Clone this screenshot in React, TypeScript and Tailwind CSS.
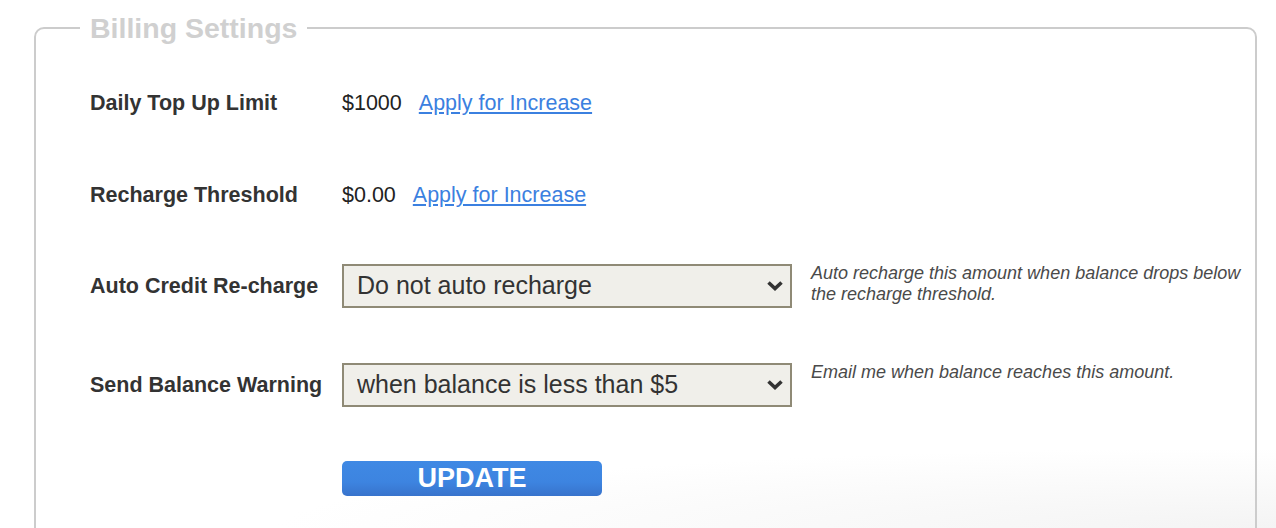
import React from "react";

const font = { fontFamily: '"Liberation Sans", Arial, Helvetica, sans-serif' };

function Chevron() {
  return (
    <svg
      className="pointer-events-none absolute right-[8px] top-1/2 -translate-y-1/2"
      width="18"
      height="12"
      viewBox="0 0 18 12"
      fill="none"
    >
      <path d="M2.5 2.5 L9 8.5 L15.5 2.5" stroke="#333" strokeWidth="3.6" strokeLinecap="butt" />
    </svg>
  );
}

function FakeSelect({ options }: { options: string[] }) {
  return (
    <div className="relative w-[450px] h-[44px] shrink-0">
      <select
        defaultValue={options[0]}
        className="appearance-none w-full h-full border-2 border-[#8f8a76] bg-[#f0efea] pl-[13px] pr-10 text-[25px] text-[#333] outline-none rounded-none"
        style={font}
      >
        {options.map((o) => (
          <option key={o}>{o}</option>
        ))}
      </select>
      <Chevron />
    </div>
  );
}

export default function App() {
  return (
    <div
      className="h-[528px] w-full overflow-hidden bg-[radial-gradient(1000px_80px_at_100%_100%,#f4f4f4,#ffffff)] pt-[12px] pl-[34px] pr-[19px]"
      style={font}
    >
      <fieldset className="border-2 border-[#cccccc] rounded-[10px] pl-[54px] pr-0 pt-[36px] h-[640px] min-w-0">
        <legend className="-ml-[10px] px-[10px] text-[28.5px] leading-[32px] font-bold text-[#d0d0d0]">
          Billing Settings
        </legend>

        {/* Daily Top Up Limit */}
        <div className="flex items-center h-[46px]">
          <div className="w-[252px] shrink-0 text-[21.5px] font-bold text-[#333]">Daily Top Up Limit</div>
          <div className="text-[21.5px] text-[#222]">$1000</div>
          <a href="#" className="ml-[17px] text-[21.5px] text-[#3b80e0] underline">
            Apply for Increase
          </a>
        </div>

        {/* Recharge Threshold */}
        <div className="flex items-center h-[46px] mt-[46px]">
          <div className="w-[252px] shrink-0 text-[21.5px] font-bold text-[#333]">Recharge Threshold</div>
          <div className="text-[21.5px] text-[#222]">$0.00</div>
          <a href="#" className="ml-[17px] text-[21.5px] text-[#3b80e0] underline">
            Apply for Increase
          </a>
        </div>

        {/* Auto Credit Re-charge */}
        <div className="flex items-start mt-[46px]">
          <div className="w-[252px] shrink-0 h-[44px] flex items-center text-[21.5px] font-bold text-[#333]">
            Auto Credit Re-charge
          </div>
          <FakeSelect options={["Do not auto recharge", "$10", "$25", "$50", "$100"]} />
          <p className="ml-[19px] -mt-[1px] w-[440px] shrink-0 text-[18px] leading-[21px] italic text-[#4a4a4a]">
            Auto recharge this amount when balance drops below the recharge threshold.
          </p>
        </div>

        {/* Send Balance Warning */}
        <div className="flex items-start mt-[55px]">
          <div className="w-[252px] shrink-0 h-[44px] flex items-center text-[21.5px] font-bold text-[#333]">
            Send Balance Warning
          </div>
          <FakeSelect options={["when balance is less than $5", "when balance is less than $10", "Never"]} />
          <p className="ml-[19px] -mt-[1px] w-[440px] shrink-0 text-[18px] leading-[21px] italic text-[#4a4a4a]">
            Email me when balance reaches this amount.
          </p>
        </div>

        <div className="flex mt-[54px]">
          <div className="w-[252px] shrink-0" />
          <button
            type="button"
            className="w-[260px] h-[35px] rounded-[5px] bg-[linear-gradient(to_bottom,#3f89e4_0%,#3d84e0_60%,#3873cc_100%)] text-white text-[27px] font-bold leading-none"
          >
            UPDATE
          </button>
        </div>
      </fieldset>
    </div>
  );
}
